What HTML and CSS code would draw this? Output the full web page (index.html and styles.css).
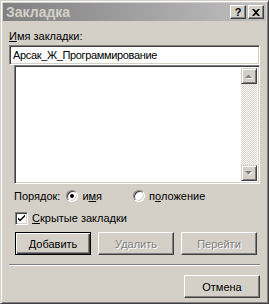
FILE: index.html
```html
<html>
	<head>
		<link rel="stylesheet" href="styles.css">
	</head>
	<body>
		<div class="window">
			<div class="titlebar">
				<span class="titlebar__text">Закладка</span>
				<button type="button" class="caption-button">?</button>
				<button type="button" class="caption-button caption-button--close">
					<svg width="8" height="7" viewBox="0 0 8 7"><path d="M0 0h2l2 2 2-2h2L5 3.5 8 7H6L4 5 2 7H0l3-3.5z" fill="#000"/></svg>
				</button>
			</div>
			<div class="content">
				<div class="field-label"><u>И</u>мя закладки:</div>
				<div class="textbox">Арсак_Ж_Программирование</div>
				<div class="listbox">
					<div class="listbox__items"></div>
					<div class="scrollbar">
						<div class="scrollbar__arrow">
							<svg width="8" height="5" viewBox="0 0 8 5"><path d="M1 5h7L4.5 1.5z" fill="#fff"/><path d="M0 4h7L3.5 0.5z" fill="#808080"/></svg>
						</div>
						<div class="scrollbar__track"></div>
						<div class="scrollbar__arrow">
							<svg width="8" height="5" viewBox="0 0 8 5"><path d="M1 1h7L4.5 4.5z" fill="#fff"/><path d="M0 0h7L3.5 3.5z" fill="#808080"/></svg>
						</div>
					</div>
				</div>
				<div class="order-row">
					<span class="order-row__label">Порядок:</span>
					<span class="radio radio--checked"></span>
					<span class="radio-text">и<u>м</u>я</span>
					<span class="radio"></span>
					<span class="radio-text">п<u>о</u>ложение</span>
				</div>
				<div class="check-row">
					<span class="checkbox">
						<svg width="9" height="9" viewBox="0 0 9 9"><path d="M1 3.5l2 2 5-5v2l-5 5-2-2z" fill="#000"/></svg>
					</span>
					<span><u>С</u>крытые закладки</span>
				</div>
				<div class="button-row">
					<button type="button" class="push-button push-button--default"><u>Д</u>обавить</button>
					<button type="button" class="push-button push-button--disabled">Удалить</button>
					<button type="button" class="push-button push-button--disabled">Перейти</button>
				</div>
				<div class="separator"></div>
				<div class="footer">
					<button type="button" class="push-button">Отмена</button>
				</div>
			</div>
		</div>
	</body>
</html>
```

FILE: styles.css
```css
body {
	margin: 0;
	font-family: "Liberation Sans", Arial, sans-serif;
	font-size: 11px;
	color: #000;
	background: #d4d0c8;
}
.window {
	box-sizing: border-box;
	width: 269px;
	height: 304px;
	background: #d4d0c8;
	border: 1px solid;
	border-color: #d4d0c8 #404040 #404040 #d4d0c8;
	box-shadow: inset 1px 1px #fff, inset -1px -1px #808080;
	padding: 2px;
	display: flex;
	flex-direction: column;
}
.titlebar {
	height: 18px;
	display: flex;
	align-items: center;
	padding: 0 2px 0 3px;
	background: linear-gradient(to right, #808080, #c0c0c0);
}
.titlebar__text {
	flex: 1;
	color: #d4d0c8;
	font-weight: bold;
	font-size: 14px;
	line-height: 18px;
}
.caption-button {
	box-sizing: border-box;
	width: 16px;
	height: 14px;
	padding: 0;
	margin-left: 2px;
	border: 1px solid;
	border-color: #fff #404040 #404040 #fff;
	box-shadow: inset -1px -1px #808080;
	background: #d4d0c8;
	font-family: "Liberation Sans", Arial, sans-serif;
	font-weight: bold;
	font-size: 11px;
	line-height: 11px;
	display: flex;
	align-items: center;
	justify-content: center;
}
.content {
	flex: 1;
	padding: 9px 6px 0 6px;
	display: flex;
	flex-direction: column;
}
.field-label {
	height: 13px;
	line-height: 13px;
	margin-bottom: 2px;
}
u {
	text-decoration-thickness: 1px;
	text-underline-offset: 1px;
}
.textbox {
	box-sizing: border-box;
	height: 20px;
	padding: 3px 0 0 3px;
	background: #fff;
	border: 1px solid;
	border-color: #808080 #fff #fff #808080;
	box-shadow: inset 1px 1px #404040, inset -1px -1px #d4d0c8;
	white-space: nowrap;
	letter-spacing: -0.35px;
}
.listbox {
	box-sizing: border-box;
	height: 119px;
	margin-left: 5px;
	background: #fff;
	border: 1px solid;
	border-color: #808080 #fff #fff #808080;
	box-shadow: inset 1px 1px #404040, inset -1px -1px #d4d0c8;
	padding: 2px;
	display: flex;
}
.listbox__items {
	flex: 1;
}
.scrollbar {
	width: 16px;
	display: flex;
	flex-direction: column;
}
.scrollbar__arrow {
	box-sizing: border-box;
	height: 16px;
	border: 1px solid;
	border-color: #d4d0c8 #404040 #404040 #d4d0c8;
	box-shadow: inset 1px 1px #fff, inset -1px -1px #808080;
	background: #d4d0c8;
	display: flex;
	align-items: center;
	justify-content: center;
}
.scrollbar__track {
	flex: 1;
	background: repeating-conic-gradient(#fff 0 25%, #d4d0c8 0 50%) 0 0 / 2px 2px;
}
.order-row {
	height: 14px;
	margin-top: 5px;
	padding-left: 5px;
	display: flex;
	align-items: center;
}
.order-row__label {
	margin-right: 6px;
}
.radio {
	box-sizing: border-box;
	width: 12px;
	height: 12px;
	border-radius: 50%;
	background: #fff;
	border: 1px solid;
	border-color: #808080 #fff #fff #808080;
	box-shadow: inset 1px 1px #404040, inset -1px -1px #d4d0c8;
	margin-right: 4px;
	display: flex;
	align-items: center;
	justify-content: center;
}
.radio--checked::after {
	content: "";
	width: 4px;
	height: 4px;
	border-radius: 50%;
	background: #000;
}
.radio-text {
	margin-right: 31px;
}
.check-row {
	height: 14px;
	margin-top: 8px;
	padding-left: 6px;
	display: flex;
	align-items: center;
}
.checkbox {
	box-sizing: border-box;
	width: 13px;
	height: 13px;
	margin-right: 4px;
	background: #fff;
	border: 1px solid;
	border-color: #808080 #fff #fff #808080;
	box-shadow: inset 1px 1px #404040, inset -1px -1px #d4d0c8;
	display: flex;
	align-items: center;
	justify-content: center;
}
.button-row {
	margin-top: 7px;
	padding-left: 6px;
	display: flex;
	gap: 7px;
}
.push-button {
	box-sizing: border-box;
	width: 76px;
	height: 23px;
	padding: 0;
	background: #d4d0c8;
	border: 1px solid;
	border-color: #fff #404040 #404040 #fff;
	box-shadow: inset -1px -1px #808080;
	font-family: "Liberation Sans", Arial, sans-serif;
	font-size: 11px;
	color: #000;
}
.push-button--default {
	border: 1px solid #000;
	box-shadow: inset 1px 1px #fff, inset -1px -1px #404040, inset -2px -2px #808080;
}
.push-button--disabled {
	color: #808080;
	text-shadow: 1px 1px #fff;
}
.separator {
	margin-top: 9px;
	height: 1px;
	background: #808080;
	border-bottom: 1px solid #fff;
}
.footer {
	margin-top: 9px;
	display: flex;
	justify-content: flex-end;
}
```
